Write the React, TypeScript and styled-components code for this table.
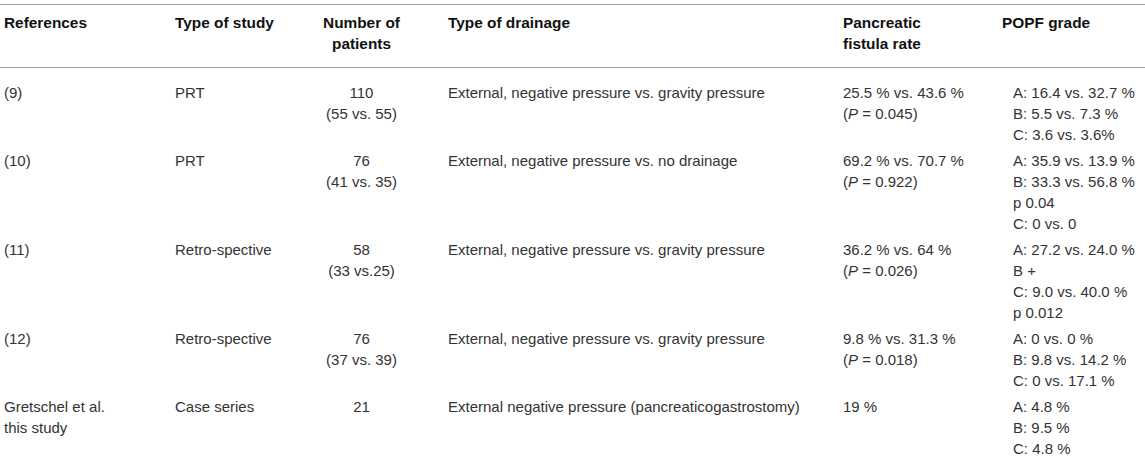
import React from "react";
import styled, { createGlobalStyle } from "styled-components";

const Global = createGlobalStyle`
  html, body { margin: 0; padding: 0; background: #fff; }
  body { font-family: "Liberation Sans", Arial, Helvetica, sans-serif; }
`;

const Wrap = styled.div`
  padding-top: 4px;
  width: 1145px;
`;

const Table = styled.table`
  width: 1145px;
  border-collapse: collapse;
  table-layout: fixed;
  border-top: 1px solid #a3a3a3;
`;

const HeadRow = styled.tr`
  border-bottom: 1px solid #a3a3a3;
`;

const HeadCell = styled.th<{ $align?: "left" | "center" }>`
  text-align: ${(p) => p.$align ?? "left"};
  vertical-align: top;
  font-weight: bold;
  font-size: 15.4px;
  line-height: 21px;
  color: #111;
  white-space: nowrap;
  padding: 7px 0 13px 4px;
`;

const BodyRow = styled.tr`
  &:first-child td {
    padding-top: 14px;
  }
`;

const Cell = styled.td<{ $align?: "left" | "center"; $indent?: number }>`
  text-align: ${(p) => p.$align ?? "left"};
  vertical-align: top;
  font-size: 15px;
  line-height: 21px;
  color: #333;
  white-space: nowrap;
  padding: 5px 0 0 ${(p) => 4 + (p.$indent ?? 0)}px;
`;

const Line = styled.div``;

const Ital = styled.i`
  font-style: italic;
`;

type Row = {
  ref: string;
  study: string;
  n: string[];
  drainage: string;
  rate: React.ReactNode[];
  grade: string[];
};

const P = (v: string) => (
  <>
    (<Ital>P</Ital> = {v})
  </>
);

const rows: Row[] = [
  {
    ref: "(9)",
    study: "PRT",
    n: ["110", "(55 vs. 55)"],
    drainage: "External, negative pressure vs. gravity pressure",
    rate: ["25.5 % vs. 43.6 %", P("0.045")],
    grade: ["A: 16.4 vs. 32.7 %", "B: 5.5 vs. 7.3 %", "C: 3.6 vs. 3.6%"],
  },
  {
    ref: "(10)",
    study: "PRT",
    n: ["76", "(41 vs. 35)"],
    drainage: "External, negative pressure vs. no drainage",
    rate: ["69.2 % vs. 70.7 %", P("0.922")],
    grade: ["A: 35.9 vs. 13.9 %", "B: 33.3 vs. 56.8 %", "p 0.04", "C: 0 vs. 0"],
  },
  {
    ref: "(11)",
    study: "Retro-spective",
    n: ["58", "(33 vs.25)"],
    drainage: "External, negative pressure vs. gravity pressure",
    rate: ["36.2 % vs. 64 %", P("0.026")],
    grade: ["A: 27.2 vs. 24.0 %", "B +", "C: 9.0 vs. 40.0 %", "p 0.012"],
  },
  {
    ref: "(12)",
    study: "Retro-spective",
    n: ["76", "(37 vs. 39)"],
    drainage: "External, negative pressure vs. gravity pressure",
    rate: ["9.8 % vs. 31.3 %", P("0.018")],
    grade: ["A: 0 vs. 0 %", "B: 9.8 vs. 14.2 %", "C: 0 vs. 17.1 %"],
  },
  {
    ref: "Gretschel et al.\nthis study",
    study: "Case series",
    n: ["21"],
    drainage: "External negative pressure (pancreaticogastrostomy)",
    rate: ["19 %"],
    grade: ["A: 4.8 %", "B: 9.5 %", "C: 4.8 %"],
  },
];

export default function App() {
  return (
    <Wrap>
      <Global />
      <Table>
        <colgroup>
          <col style={{ width: 171 }} />
          <col style={{ width: 104 }} />
          <col style={{ width: 169 }} />
          <col style={{ width: 395 }} />
          <col style={{ width: 159 }} />
          <col style={{ width: 147 }} />
        </colgroup>
        <thead>
          <HeadRow>
            <HeadCell>References</HeadCell>
            <HeadCell>Type of study</HeadCell>
            <HeadCell $align="center">
              Number of
              <br />
              patients
            </HeadCell>
            <HeadCell>Type of drainage</HeadCell>
            <HeadCell>
              Pancreatic
              <br />
              fistula rate
            </HeadCell>
            <HeadCell>POPF grade</HeadCell>
          </HeadRow>
        </thead>
        <tbody>
          {rows.map((r, i) => (
            <BodyRow key={i}>
              <Cell>
                {r.ref.split("\n").map((l, j) => (
                  <Line key={j}>{l}</Line>
                ))}
              </Cell>
              <Cell>{r.study}</Cell>
              <Cell $align="center">
                {r.n.map((l, j) => (
                  <Line key={j}>{l}</Line>
                ))}
              </Cell>
              <Cell>{r.drainage}</Cell>
              <Cell>
                {r.rate.map((l, j) => (
                  <Line key={j}>{l}</Line>
                ))}
              </Cell>
              <Cell $indent={11}>
                {r.grade.map((l, j) => (
                  <Line key={j}>{l}</Line>
                ))}
              </Cell>
            </BodyRow>
          ))}
        </tbody>
      </Table>
    </Wrap>
  );
}
